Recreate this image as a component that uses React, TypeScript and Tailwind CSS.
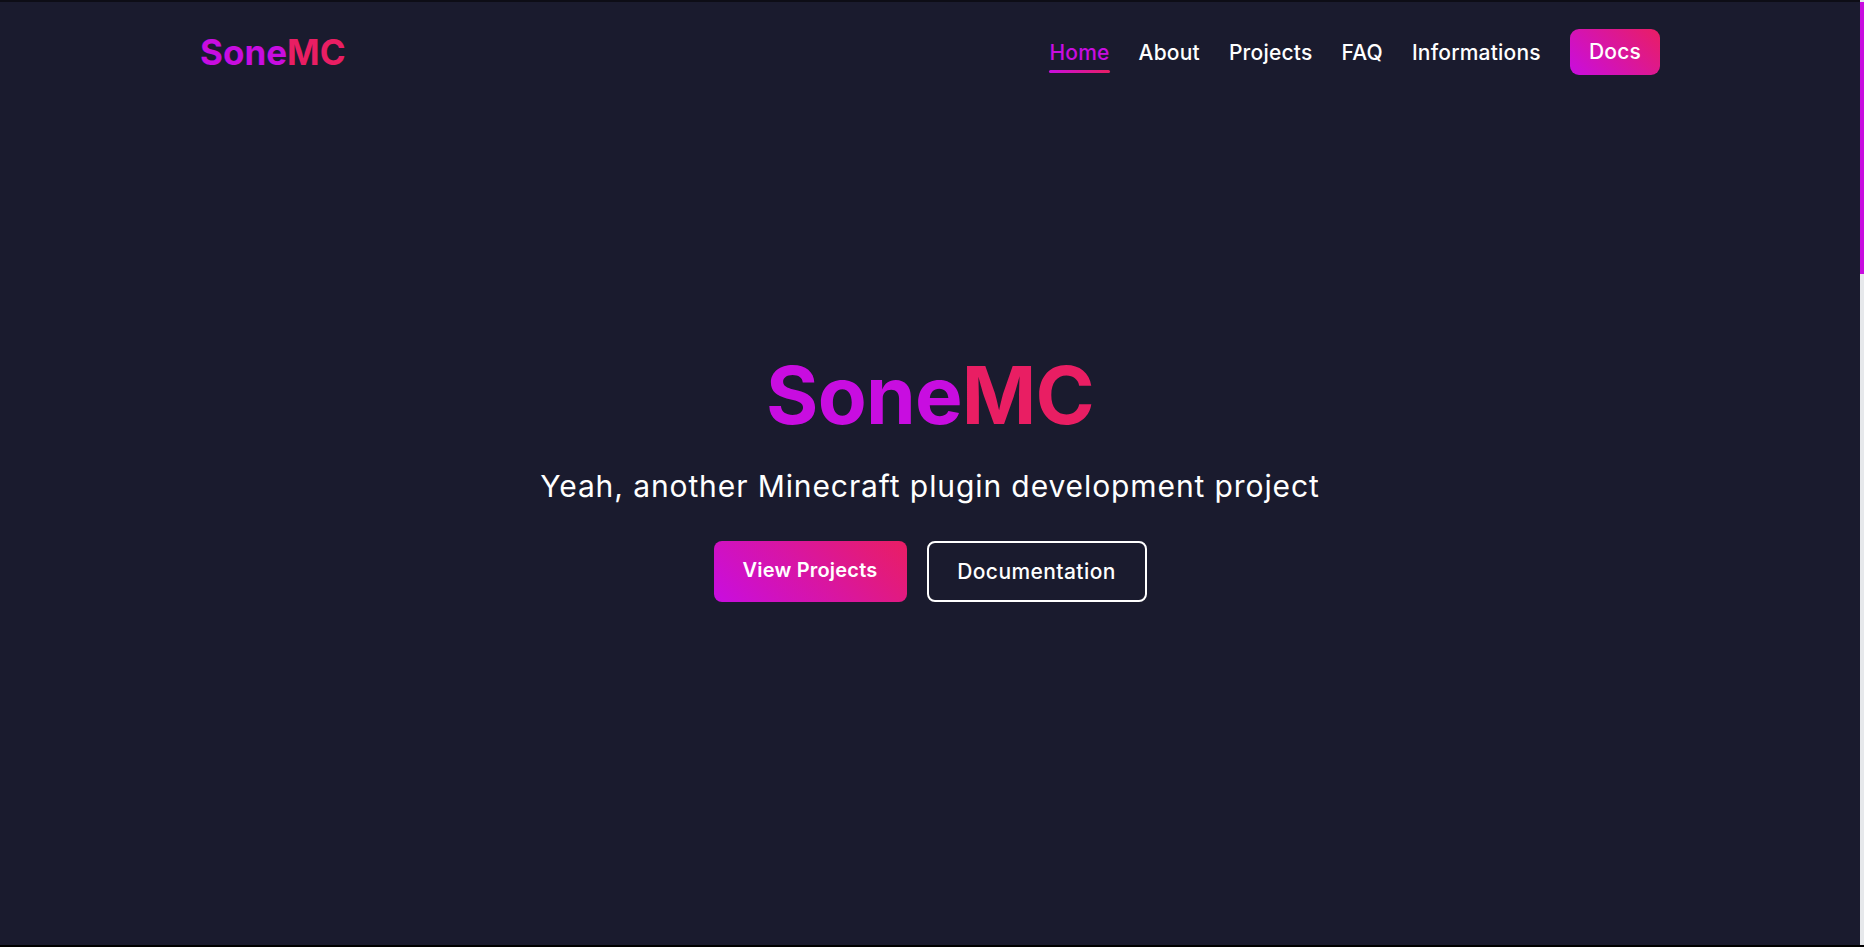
import React from "react";

const grad = "bg-[linear-gradient(45deg,#c80de0,#e91e63)]";

function NavLink({ label, active }: { label: string; active?: boolean }) {
  return (
    <a
      href="#"
      className={
        "relative text-[21px] leading-none font-medium tracking-[0.01em] " +
        (active ? "text-[#c80de0]" : "text-white")
      }
    >
      {label}
      {active && (
        <span className="absolute left-0 right-0 -bottom-[10px] h-[3px] rounded-full bg-[linear-gradient(90deg,#c80de0,#e91e63)]" />
      )}
    </a>
  );
}

export default function App() {
  return (
    <div className="flex h-screen w-full flex-col bg-[#1a1b2e] font-['Inter','Noto_Sans',sans-serif] overflow-hidden">
      <div className="flex flex-1 min-h-0">
        <main className="flex flex-1 flex-col border-t-2 border-[#0d0d16]">
          <header className="h-[100px] flex items-center">
            <div className="mx-auto flex w-[1460px] items-center justify-between">
              <a href="#" className="text-[35px] leading-none font-bold">
                <span className="text-[#c80de0]">Sone</span>
                <span className="text-[#e91e63]">MC</span>
              </a>
              <nav className="flex items-center gap-[29px]">
                <NavLink label="Home" active />
                <NavLink label="About" />
                <NavLink label="Projects" />
                <NavLink label="FAQ" />
                <NavLink label="Informations" />
                <a
                  href="#"
                  className={
                    "flex h-[46px] items-center rounded-[9px] px-[19px] text-[21px] font-medium tracking-[0.01em] text-white " +
                    grad
                  }
                >
                  Docs
                </a>
              </nav>
            </div>
          </header>

          <section className="flex flex-col items-center pt-[253px]">
            <h1 className="text-[80px] leading-none font-bold tracking-[-0.01em]">
              <span className="text-[#c80de0]">Sone</span>
              <span className="text-[#e91e63]">MC</span>
            </h1>
            <p className="mt-[36px] text-[30px] leading-none tracking-[0.03em] text-white">
              Yeah, another Minecraft plugin development project
            </p>
            <div className="mt-[40px] flex gap-[20px]">
              <a
                href="#"
                className={
                  "flex h-[61px] w-[193px] items-center justify-center rounded-[8px] pb-[3px] text-[20px] font-semibold tracking-[0.01em] text-white " +
                  grad
                }
              >
                View Projects
              </a>
              <a
                href="#"
                className="flex h-[61px] w-[220px] items-center justify-center rounded-[8px] border-2 border-white text-[21px] font-medium tracking-[0.02em] text-white"
              >
                Documentation
              </a>
            </div>
          </section>
        </main>
        <div className="flex w-[4px] flex-col bg-[#e6e8eb]">
          <div className="mt-[2px] h-[272px] bg-[#c80de0]" />
        </div>
      </div>
      <div className="h-[2px] bg-black" />
    </div>
  );
}
